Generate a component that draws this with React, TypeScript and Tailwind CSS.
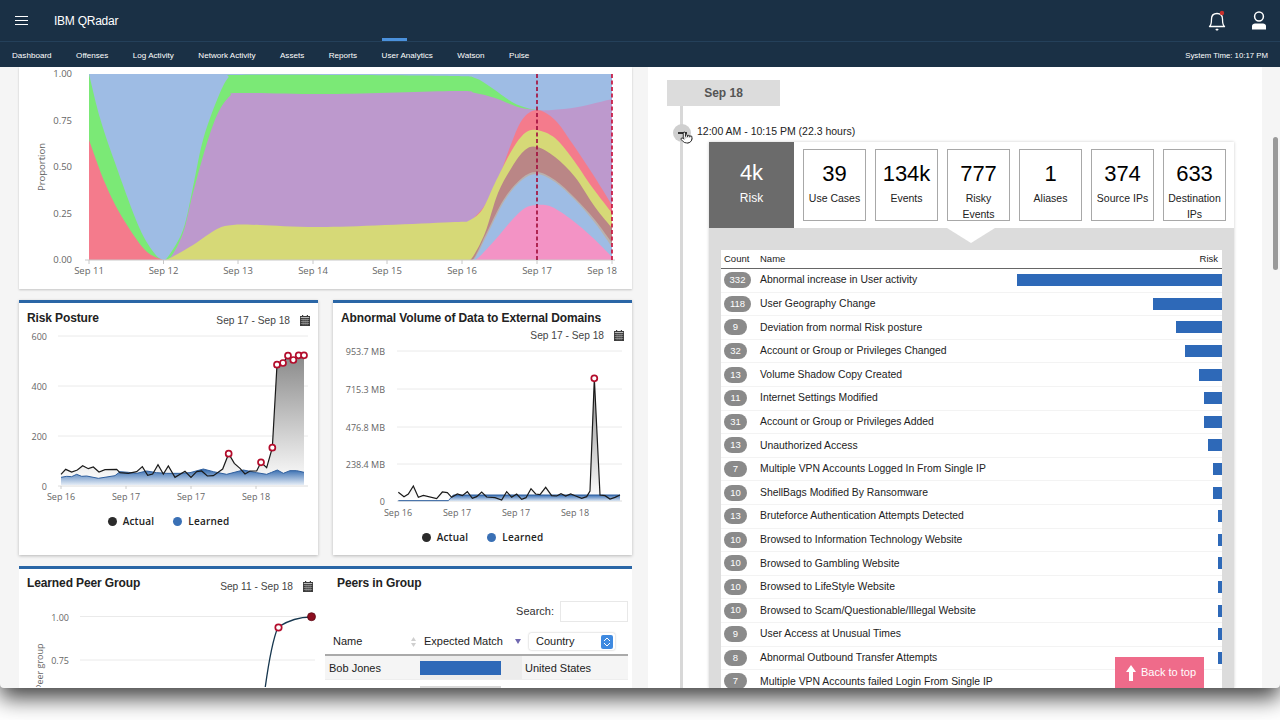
import React from "react";
import { Pointer } from "lucide-react";

type P = [number, number];

function smooth(pts: P[]): string {
  let d = `M${pts[0][0]} ${pts[0][1]}`;
  for (let i = 0; i < pts.length - 1; i++) {
    const p0 = pts[Math.max(i - 1, 0)];
    const p1 = pts[i];
    const p2 = pts[i + 1];
    const p3 = pts[Math.min(i + 2, pts.length - 1)];
    const c1x = p1[0] + (p2[0] - p0[0]) / 6;
    const c1y = p1[1] + (p2[1] - p0[1]) / 6;
    const c2x = p2[0] - (p3[0] - p1[0]) / 6;
    const c2y = p2[1] - (p3[1] - p1[1]) / 6;
    d += ` C${c1x.toFixed(1)} ${c1y.toFixed(1)} ${c2x.toFixed(1)} ${c2y.toFixed(1)} ${p2[0]} ${p2[1]}`;
  }
  return d;
}
const area = (pts: P[], base = 260) => `${smooth(pts)} L${pts[pts.length - 1][0]} ${base} L${pts[0][0]} ${base} Z`;
const poly = (pts: P[]) => pts.map((p) => p.join(",")).join(" ");

const axisFont = { fontFamily: '"Open Sans", sans-serif' };

function StreamChart() {
  const greenL: P[] = [[89, 74], [100, 118], [114, 160], [139, 227], [155, 254], [163, 260]];
  const redL: P[] = [[89, 140], [105, 183], [122, 217], [145, 250], [163, 260]];
  const green: P[] = [[160, 260], [167, 258], [183, 230], [193, 187], [203, 140], [217, 100], [228, 78], [238, 75], [350, 75], [455, 76], [475, 78], [492, 88], [512, 102], [527, 108], [537, 110], [612, 125]];
  const purple: P[] = [[160, 260], [170, 258], [183, 233], [193, 193], [207, 143], [218, 113], [230, 96], [240, 93], [330, 94], [455, 91], [475, 93], [495, 98], [518, 107], [537, 110], [552, 110], [578, 107], [612, 99]];
  const red: P[] = [[470, 222], [485, 205], [498, 180], [510, 147], [522, 120], [537, 110], [555, 120], [572, 143], [592, 173], [612, 205]];
  const yellow: P[] = [[160, 260], [168, 259], [193, 245], [217, 229], [233, 225], [260, 225], [327, 227], [455, 222], [468, 221], [482, 210], [495, 183], [512, 150], [525, 133], [537, 130], [555, 138], [572, 158], [592, 187], [612, 213]];
  const brown: P[] = [[466, 260], [472, 258], [485, 233], [498, 193], [512, 167], [525, 150], [537, 147], [555, 157], [575, 177], [595, 207], [612, 228]];
  const tan: P[] = [[468, 260], [474, 258], [487, 232], [504, 199], [522, 178], [537, 172], [555, 180], [575, 198], [595, 220], [612, 243]];
  const blue: P[] = [[469, 260], [475, 258], [488, 233], [505, 200], [522, 180], [537, 174], [555, 182], [575, 200], [595, 223], [612, 247]];
  const pink: P[] = [[472, 260], [478, 258], [495, 240], [512, 220], [525, 208], [537, 205], [552, 207], [572, 220], [592, 237], [612, 257]];
  const days: [number, string, string][] = [[89, "Sep 11", "middle"], [163.5, "Sep 12", "middle"], [238, "Sep 13", "middle"], [313, "Sep 14", "middle"], [387, "Sep 15", "middle"], [462, "Sep 16", "middle"], [537, "Sep 17", "middle"], [617, "Sep 18", "end"]];
  return (
    <svg viewBox="19 67 613 222" className="block w-[613px] h-[222px]" style={axisFont}>
      <defs>
        <clipPath id="plot"><rect x="89" y="74" width="523" height="186" /></clipPath>
      </defs>
      <g clipPath="url(#plot)">
        <rect x="89" y="74" width="523" height="186" fill="#9ebce4" />
        <path d={area(greenL)} fill="#7be976" />
        <path d={area(redL)} fill="#f47b8c" />
        <path d={area(green)} fill="#7be976" />
        <path d={area(purple)} fill="#bd99cd" />
        <path d={area(red)} fill="#f47b8c" />
        <path d={area(yellow)} fill="#d6d977" />
        <path d={area(brown)} fill="#ba8686" />
        <path d={area(tan)} fill="#b9b1ad" />
        <path d={area(blue)} fill="#9ebce4" />
        <path d={area(pink)} fill="#f393c5" />
      </g>
      <line x1="85" x2="615" y1="260" y2="260" stroke="#c8c8c8" />
      <line x1="537" x2="537" y1="74" y2="260" stroke="#a4123f" strokeWidth="1.7" strokeDasharray="4 2.5" />
      <line x1="612" x2="612" y1="74" y2="260" stroke="#c8143f" strokeWidth="1.7" strokeDasharray="4 2.5" />
      {[["1.00", 77], ["0.75", 123.5], ["0.50", 170], ["0.25", 216.5], ["0.00", 263]].map(([t, y]) => (
        <text key={t} x="72" y={y} textAnchor="end" fontSize="9.5" fill="#666">{t}</text>
      ))}
      <text transform="translate(45 167) rotate(-90)" textAnchor="middle" fontSize="9.5" fill="#666">Proportion</text>
      {days.map(([x, t, a]) => (
        <g key={t}>
          <line x1={a === "end" ? 612 : x} x2={a === "end" ? 612 : x} y1="260" y2="264" stroke="#c8c8c8" />
          <text x={x} y="274" textAnchor={a as "middle" | "end"} fontSize="9.5" fill="#666">{t}</text>
        </g>
      ))}
    </svg>
  );
}

const Ring = ({ x, y, r = 3 }: { x: number; y: number; r?: number }) => (
  <circle cx={x} cy={y} r={r} fill="#fff" stroke="#b30d2c" strokeWidth="1.7" />
);

function RiskChart() {
  const m = (a: P[]): P[] => a.map(([x, y]) => [x / 3, 290 + y / 3]);
  const actual = m([[183, 553], [197, 538], [215, 546], [232, 540], [248, 527], [265, 536], [280, 531], [297, 546], [315, 539], [350, 538], [360, 548], [385, 550], [410, 545], [427, 530], [443, 556], [458, 552], [474, 524], [490, 552], [505, 528], [525, 562], [555, 544], [573, 562], [590, 545], [605, 543], [622, 558], [640, 557], [668, 537], [686, 491], [703, 520], [720, 535], [735, 552], [750, 543], [770, 543], [783, 517], [800, 533], [817, 473], [831, 224], [849, 219], [864, 197], [880, 210], [896, 196], [912, 196]]);
  const learned = m([[183, 562], [200, 559], [215, 560], [230, 553], [245, 559], [260, 558], [295, 565], [345, 557], [360, 545], [385, 547], [410, 550], [440, 543], [470, 548], [500, 550], [540, 550], [570, 548], [610, 537], [640, 545], [680, 553], [730, 540], [770, 548], [800, 553], [815, 547], [832, 540], [850, 550], [870, 542], [890, 542], [912, 547]]);
  const rings = m([[686, 491], [783, 517], [817, 473], [831, 224], [849, 219], [864, 197], [880, 210], [896, 196], [912, 196]]);
  return (
    <svg viewBox="19 330 299 175" className="block w-[299px] h-[175px]" style={axisFont}>
      <defs>
        <linearGradient id="g1" x1="0" x2="0" y1="0" y2="1"><stop offset="0" stopColor="#8a8a8a" /><stop offset="1" stopColor="#fff" /></linearGradient>
        <linearGradient id="b1" x1="0" x2="0" y1="0" y2="1"><stop offset="0" stopColor="#2f67ad" /><stop offset="1" stopColor="#e4ecf6" /></linearGradient>
      </defs>
      {[336, 386, 436].map((y) => <line key={y} x1="58" x2="308" y1={y} y2={y} stroke="#eaeaea" />)}
      <line x1="58" x2="308" y1="486" y2="486" stroke="#dcdcdc" />
      {[["600", 340], ["400", 390], ["200", 440], ["0", 490]].map(([t, y]) => (
        <text key={t} x="47" y={y} textAnchor="end" fontSize="9" fill="#666">{t}</text>
      ))}
      <polygon points={`61,485 ${poly(actual)} 304,485`} fill="url(#g1)" />
      <polygon points={`61,485 ${poly(learned)} 304,485`} fill="url(#b1)" />
      <polyline points={poly(learned)} fill="none" stroke="#2f5f9e" strokeWidth="1" />
      <polyline points={poly(actual)} fill="none" stroke="#1a1a1a" strokeWidth="1.2" />
      {rings.map(([x, y], i) => <Ring key={i} x={x} y={y} />)}
      {[[61, "Sep 16"], [126, "Sep 17"], [191, "Sep 17"], [256, "Sep 18"]].map(([x, t], i) => (
        <g key={i}>
          <line x1={x} x2={x} y1="486" y2="489" stroke="#ccc" />
          <text x={x} y="500" textAnchor="middle" fontSize="9" fill="#666">{t}</text>
        </g>
      ))}
    </svg>
  );
}

function VolumeChart() {
  const m = (a: P[]): P[] => a.map(([x, y]) => [325 + x / 3, 290 + y / 3]);
  const actual = m([[220, 607], [237, 620], [250, 612], [265, 588], [280, 622], [295, 616], [335, 626], [352, 606], [367, 608], [380, 622], [397, 612], [412, 617], [427, 605], [442, 625], [455, 620], [470, 606], [485, 621], [510, 623], [530, 630], [545, 605], [560, 622], [575, 612], [590, 628], [603, 623], [618, 596], [632, 612], [645, 614], [662, 592], [680, 617], [695, 618], [708, 611], [722, 618], [737, 612], [752, 618], [770, 625], [785, 620], [795, 603], [808, 265], [825, 615], [840, 617], [855, 627], [870, 622], [885, 615]]);
  const learned = m([[220, 632], [370, 632], [385, 615], [885, 615]]);
  return (
    <svg viewBox="333 345 299 175" className="block w-[299px] h-[175px]" style={axisFont}>
      <defs>
        <linearGradient id="g2" x1="0" x2="0" y1="0" y2="1"><stop offset="0" stopColor="#8a8a8a" /><stop offset="1" stopColor="#fff" /></linearGradient>
        <linearGradient id="b2" x1="0" x2="0" y1="0" y2="1"><stop offset="0" stopColor="#3a70b5" /><stop offset="1" stopColor="#dbe6f3" /></linearGradient>
      </defs>
      {[351, 389, 427, 464].map((y) => <line key={y} x1="397" x2="622" y1={y} y2={y} stroke="#eaeaea" />)}
      <line x1="397" x2="622" y1="501" y2="501" stroke="#dcdcdc" />
      {[["953.7 MB", 355], ["715.3 MB", 393], ["476.8 MB", 431], ["238.4 MB", 468], ["0", 505]].map(([t, y]) => (
        <text key={t} x="385" y={y} textAnchor="end" fontSize="9" fill="#666">{t}</text>
      ))}
      <polygon points={`398,500 ${poly(actual)} 620,500`} fill="url(#g2)" />
      <polygon points={`398,501 ${poly(learned)} 620,501`} fill="url(#b2)" />
      <polyline points={poly(learned)} fill="none" stroke="#2f5f9e" strokeWidth="1" />
      <polyline points={poly(actual)} fill="none" stroke="#1a1a1a" strokeWidth="1.2" />
      <Ring x={594.3} y={378.3} />
      {[[398, "Sep 16"], [457, "Sep 17"], [516, "Sep 17"], [575, "Sep 18"]].map(([x, t], i) => (
        <text key={i} x={x} y="516" textAnchor="middle" fontSize="9" fill="#666">{t}</text>
      ))}
    </svg>
  );
}

function PeerChart() {
  return (
    <svg viewBox="19 600 306 88" className="block w-[306px] h-[88px]" style={axisFont}>
      {[617.5, 661].map((y) => <line key={y} x1="80" x2="315" y1={y} y2={y} stroke="#eaeaea" />)}
      <text x="69" y="621.5" textAnchor="end" fontSize="9" fill="#666">1.00</text>
      <text x="69" y="665" textAnchor="end" fontSize="9" fill="#666">0.75</text>
      <text transform="translate(43 691) rotate(-90)" fontSize="9" fill="#666">Peer group</text>
      <path d="M265 690 C268 668 273 640 278 628 C286 623 298 618 311 618" fill="none" stroke="#17374f" strokeWidth="1.3" />
      <Ring x={278.5} y={628.5} r={3.2} />
      <circle cx="311.5" cy="617.7" r="4" fill="#8c0d1f" stroke="#5a0a14" strokeWidth="0.8" />
    </svg>
  );
}

const Calendar = () => (
  <svg width="10" height="11" viewBox="0 0 10 11" className="shrink-0">
    <rect x="0" y="1" width="10" height="10" fill="#3c3c3c" />
    <rect x="2" y="0" width="1.2" height="2" fill="#3c3c3c" />
    <rect x="6.8" y="0" width="1.2" height="2" fill="#3c3c3c" />
    <rect x="0.8" y="2" width="8.4" height="1" fill="#bbb" />
    {[4.2, 6.2, 8.2].map((y) => <rect key={y} x="0.8" y={y} width="8.4" height="0.6" fill="#aaa" />)}
    {[2.8, 4.8, 6.8].map((x) => <rect key={x} x={x} y="3.6" width="0.5" height="6.6" fill="#aaa" />)}
  </svg>
);

const Legend = () => (
  <div className="flex justify-center items-center gap-[19px] h-[14px] text-[10px] font-semibold tracking-[0.2px] text-[#222] font-['Open_Sans',sans-serif]">
    <span className="flex items-center gap-[6px]"><span className="w-[9px] h-[9px] rounded-full bg-[#2b2b2b]" />Actual</span>
    <span className="flex items-center gap-[6px]"><span className="w-[9px] h-[9px] rounded-full bg-[#3a70b5]" />Learned</span>
  </div>
);

const nav = ["Dashboard", "Offenses", "Log Activity", "Network Activity", "Assets", "Reports", "User Analytics", "Watson", "Pulse"];
const stats: [string, string[]][] = [["39", ["Use Cases"]], ["134k", ["Events"]], ["777", ["Risky", "Events"]], ["1", ["Aliases"]], ["374", ["Source IPs"]], ["633", ["Destination", "IPs"]]];
const rows: [string, string, number][] = [
  ["332", "Abnormal increase in User activity", 205],
  ["118", "User Geography Change", 69],
  ["9", "Deviation from normal Risk posture", 46],
  ["32", "Account or Group or Privileges Changed", 37],
  ["13", "Volume Shadow Copy Created", 23],
  ["11", "Internet Settings Modified", 18],
  ["31", "Account or Group or Privileges Added", 18],
  ["13", "Unauthorized Access", 14],
  ["7", "Multiple VPN Accounts Logged In From Single IP", 9],
  ["10", "ShellBags Modified By Ransomware", 9],
  ["13", "Bruteforce Authentication Attempts Detected", 4.5],
  ["10", "Browsed to Information Technology Website", 4.5],
  ["10", "Browsed to Gambling Website", 4.5],
  ["10", "Browsed to LifeStyle Website", 4.5],
  ["10", "Browsed to Scam/Questionable/Illegal Website", 4.5],
  ["9", "User Access at Unusual Times", 4.5],
  ["8", "Abnormal Outbound Transfer Attempts", 4.5],
  ["7", "Multiple VPN Accounts failed Login From Single IP", 0],
];

export default function App() {
  return (
    <div className="w-[1280px] h-[720px] bg-white overflow-hidden font-['Liberation_Sans',Arial,sans-serif]">
      <div className="w-[1280px] h-[688px] flex flex-col rounded-b-[4px] overflow-hidden bg-[#f5f5f5] shadow-[0_10px_22px_0_rgba(0,0,0,0.75)] relative">
        <header className="h-[42px] shrink-0 bg-[#1a3045] border-b border-[#24405a] flex items-center text-white">
          <div className="ml-[15px] w-[13px] flex flex-col gap-[2.5px]">
            <span className="h-[1.5px] bg-white" /><span className="h-[1.5px] bg-white" /><span className="h-[1.5px] bg-white" />
          </div>
          <span className="ml-[26px] text-[12px] tracking-[-0.25px]">IBM QRadar</span>
          <div className="ml-auto mr-[13px] flex items-center gap-[24px]">
            <svg width="20" height="22" viewBox="0 0 20 22" fill="none">
              <path d="M2.5 16.5 C4.5 15 4.5 12 4.5 9 C4.5 5.5 6.5 3.5 10 3.5 C13.5 3.5 15.5 5.5 15.5 9 C15.5 12 15.5 15 17.5 16.5 Z" stroke="#fff" strokeWidth="1.3" strokeLinejoin="round" />
              <rect x="8.5" y="18.8" width="3" height="1.6" rx="0.8" fill="#fff" />
              <circle cx="15" cy="3" r="2.2" fill="#c9302c" />
            </svg>
            <svg width="16" height="19" viewBox="0 0 16 19" fill="none">
              <circle cx="8" cy="5.5" r="4.4" stroke="#fff" strokeWidth="1.5" />
              <path d="M1 18.5 V15 C1 13.5 2.5 12.5 4 12.5 H12 C13.5 12.5 15 13.5 15 15 V18.5 Z" fill="#fff" />
            </svg>
          </div>
        </header>
        <nav className="h-[25px] shrink-0 bg-[#1a3045] flex items-center text-white text-[8.1px] pl-[12px] pr-[12px] pt-[3px] gap-[24.5px] relative">
          {nav.map((n) => (
            <span key={n} className="relative">
              {n === "User Analytics" && <span className="absolute left-0 top-[-12px] w-[25px] h-[3px] bg-[#4b91dc]" />}
              {n}
            </span>
          ))}
          <span className="ml-auto text-[7.8px]">System Time: 10:17 PM</span>
        </nav>

        <main className="flex-1 min-h-0 flex overflow-hidden">
          <section className="w-[648px] shrink-0 pl-[19px] flex flex-col gap-[11px]">
            <div className="w-[613px] h-[222px] shrink-0 bg-white shadow-[0_1px_2px_rgba(0,0,0,0.2)]">
              <StreamChart />
            </div>
            <div className="w-[613px] flex gap-[15px] h-[255px] shrink-0">
              <div className="w-[299px] bg-white border-t-[3px] border-[#2a66a6] shadow-[0_1px_3px_rgba(0,0,0,0.25)]">
                <div className="h-[27px] px-[8px] flex justify-between items-start">
                  <span className="text-[12px] tracking-[-0.12px] font-bold text-[#222] leading-[15px] pt-[8px]">Risk Posture</span>
                  <span className="flex items-center gap-[10px] text-[10.2px] text-[#444] pt-[10px]">Sep 17 - Sep 18 <Calendar /></span>
                </div>
                <RiskChart />
                <div className="mt-[9px]"><Legend /></div>
              </div>
              <div className="w-[299px] bg-white border-t-[3px] border-[#2a66a6] shadow-[0_1px_3px_rgba(0,0,0,0.25)]">
                <div className="h-[42px] px-[8px] flex flex-col">
                  <span className="text-[12px] tracking-[-0.12px] font-bold text-[#222] leading-[15px] pt-[8px] h-[23px]">Abnormal Volume of Data to External Domains</span>
                  <span className="self-end flex items-center gap-[10px] text-[10.2px] text-[#444] pt-[2px]">Sep 17 - Sep 18 <Calendar /></span>
                </div>
                <VolumeChart />
                <div className="mt-[10px]"><Legend /></div>
              </div>
            </div>
            <div className="w-[613px] h-[140px] shrink-0 bg-white border-t-[3px] border-[#2a66a6] flex overflow-hidden">
              <div className="w-[306px] shrink-0">
                <div className="h-[30px] pl-[8px] pr-[12px] flex justify-between items-start">
                  <span className="text-[12px] tracking-[-0.12px] font-bold text-[#222] leading-[15px] pt-[7px]">Learned Peer Group</span>
                  <span className="flex items-center gap-[10px] text-[10.2px] text-[#444] pt-[10px]">Sep 11 - Sep 18 <Calendar /></span>
                </div>
                <PeerChart />
              </div>
              <div className="w-[307px] text-[#222] text-[11px]">
                <div className="h-[29px] pl-[12px] pt-[7px] text-[12px] tracking-[-0.12px] font-bold leading-[15px]">Peers in Group</div>
                <div className="h-[21px] flex justify-end items-center gap-[6px] pr-[4px] mt-[3px]">
                  <span className="text-[#333]">Search:</span>
                  <span className="w-[68px] h-[21px] border border-[#e8e8e8] bg-white" />
                </div>
                <div className="h-[21px] mt-[9px] mb-[2px] flex items-center w-[303px]">
                  <span className="w-[99px] pl-[8px] flex justify-between items-center pr-[8px]">Name
                    <svg width="5" height="10" viewBox="0 0 5 10"><path d="M2.5 0 L5 4 H0Z M2.5 10 L5 6 H0Z" fill="#cfcfcf" /></svg>
                  </span>
                  <span className="w-[105px] flex items-center justify-between pr-[8px]">Expected Match
                    <svg width="6" height="5" viewBox="0 0 6 5"><path d="M0 0 H6 L3 5Z" fill="#7068b0" /></svg>
                  </span>
                  <span className="w-[86px] h-[17px] bg-white shadow-[0_0_2px_rgba(0,0,0,0.3)] rounded-[2px] flex items-center justify-between pl-[7px] pr-[2px]">Country
                    <span className="w-[12px] h-[14px] rounded-[2px] bg-[#3f8ae0] flex flex-col items-center justify-center gap-[2px]">
                      <svg width="6" height="3" viewBox="0 0 6 3"><path d="M0 3 L3 0 L6 3" stroke="#fff" fill="none" /></svg>
                      <svg width="6" height="3" viewBox="0 0 6 3"><path d="M0 0 L3 3 L6 0" stroke="#fff" fill="none" /></svg>
                    </span>
                  </span>
                </div>
                <div className="h-[2px] w-[303px] bg-[#aaa]" />
                <div className="h-[24px] w-[303px] bg-[#f5f5f5] flex items-center border-b border-[#eee]">
                  <span className="w-[95px] pl-[4px] pt-[2px]">Bob Jones</span>
                  <span className="w-[102px] h-full bg-[#ececec] flex items-center"><span className="w-[81px] h-[14px] bg-[#2e69b8]" /></span>
                  <span className="pl-[3px] pt-[2px]">United States</span>
                </div>
                <div className="h-[10px] w-[303px] pl-[95px] pt-[6px]"><div className="w-[81px] h-[4px] bg-[#d8d8d8]" /></div>
              </div>
            </div>
          </section>

          <section className="w-[614px] shrink-0 bg-white pl-[19px] pt-[13px] flex flex-col">
            <div className="w-[113px] h-[26px] shrink-0 bg-[#dcdcdc] flex items-center justify-center text-[12px] font-bold text-[#555]">Sep 18</div>
            <div className="ml-[13px] flex-1 border-l-[3px] border-[#d8d8d8] relative">
              <span className="absolute left-[-10px] top-[18px] w-[18px] h-[18px] rounded-full bg-[#cfcfcf] flex items-center justify-center">
                <span className="w-[9px] h-[2.5px] bg-[#333]" />
              </span>
              <Pointer size={13} className="absolute left-[-3px] top-[25px] text-black" fill="#fff" strokeWidth={1.5} />
              <div className="pl-[14px] pt-[18px] h-[32px] text-[10.5px] leading-[14px] text-[#222]">12:00 AM - 10:15 PM (22.3 hours)</div>
              <div className="ml-[26px] mt-[4px] w-[525px] bg-white shadow-[0_0_3px_rgba(0,0,0,0.2)]">
                <div className="h-[86px] flex">
                  <div className="w-[85px] bg-[#6b6b6b] text-white flex flex-col items-center pt-[18px]">
                    <span className="text-[22px] leading-[26px]">4k</span>
                    <span className="text-[12px] leading-[16px] mt-[4px]">Risk</span>
                  </div>
                  <div className="flex gap-[9px] pl-[9px] pt-[7px]">
                    {stats.map(([v, l]) => (
                      <div key={v} className="w-[63px] h-[72px] border border-[#a8a8a8] flex flex-col items-center text-center overflow-hidden">
                        <span className="text-[22px] leading-[26px] mt-[11px] text-black">{v}</span>
                        <span className="mt-[3px] flex flex-col">
                          {l.map((t) => <span key={t} className="text-[10.5px] leading-[16px] text-[#222]">{t}</span>)}
                        </span>
                      </div>
                    ))}
                  </div>
                </div>
                <div className="bg-[#dcdcdc] relative px-[12px] pt-[22px] h-[460px]">
                  <span className="absolute left-[238px] top-0 w-0 h-0 border-l-[24px] border-r-[24px] border-t-[15px] border-l-transparent border-r-transparent border-t-white" />
                  <div className="bg-white h-[438px] overflow-hidden">
                    <div className="h-[19px] border-b border-[#666] flex items-center text-[9.5px] text-[#222] pl-[3px] pr-[4px]">
                      <span className="w-[36px]">Count</span><span className="flex-1">Name</span><span>Risk</span>
                    </div>
                    {rows.map(([c, n, w], i) => (
                      <div key={i} className="h-[23.6px] flex items-center border-b border-[#f3f3f3]">
                        <span className="w-[39px] shrink-0 pl-[3px]">
                          <span className={`${c.length > 2 ? "w-[27px]" : "w-[23px]"} h-[16px] rounded-full bg-[#8a8a8a] text-white text-[9.5px] flex items-center justify-center`}>{c}</span>
                        </span>
                        <span className="flex-1 text-[10.4px] text-[#222]">{n}</span>
                        <span className="h-[12px] bg-[#2e69b8]" style={{ width: w }} />
                      </div>
                    ))}
                  </div>
                </div>
              </div>
              <div className="absolute left-[432px] top-[551px] w-[89px] h-[31px] bg-[#ef6b8a] text-white text-[11px] flex items-center pl-[11px] gap-[5px]">
                <svg width="10" height="16" viewBox="0 0 10 16" fill="#fff"><path d="M5 0 L10 7 H7 V16 H3 V7 H0 Z" /></svg>
                Back to top
              </div>
            </div>
          </section>
          <aside className="flex-1 relative">
            <span className="absolute left-[11px] top-[70px] w-[5px] h-[133px] rounded-full bg-[#9a9a9a]" />
          </aside>
        </main>
      </div>
    </div>
  );
}
